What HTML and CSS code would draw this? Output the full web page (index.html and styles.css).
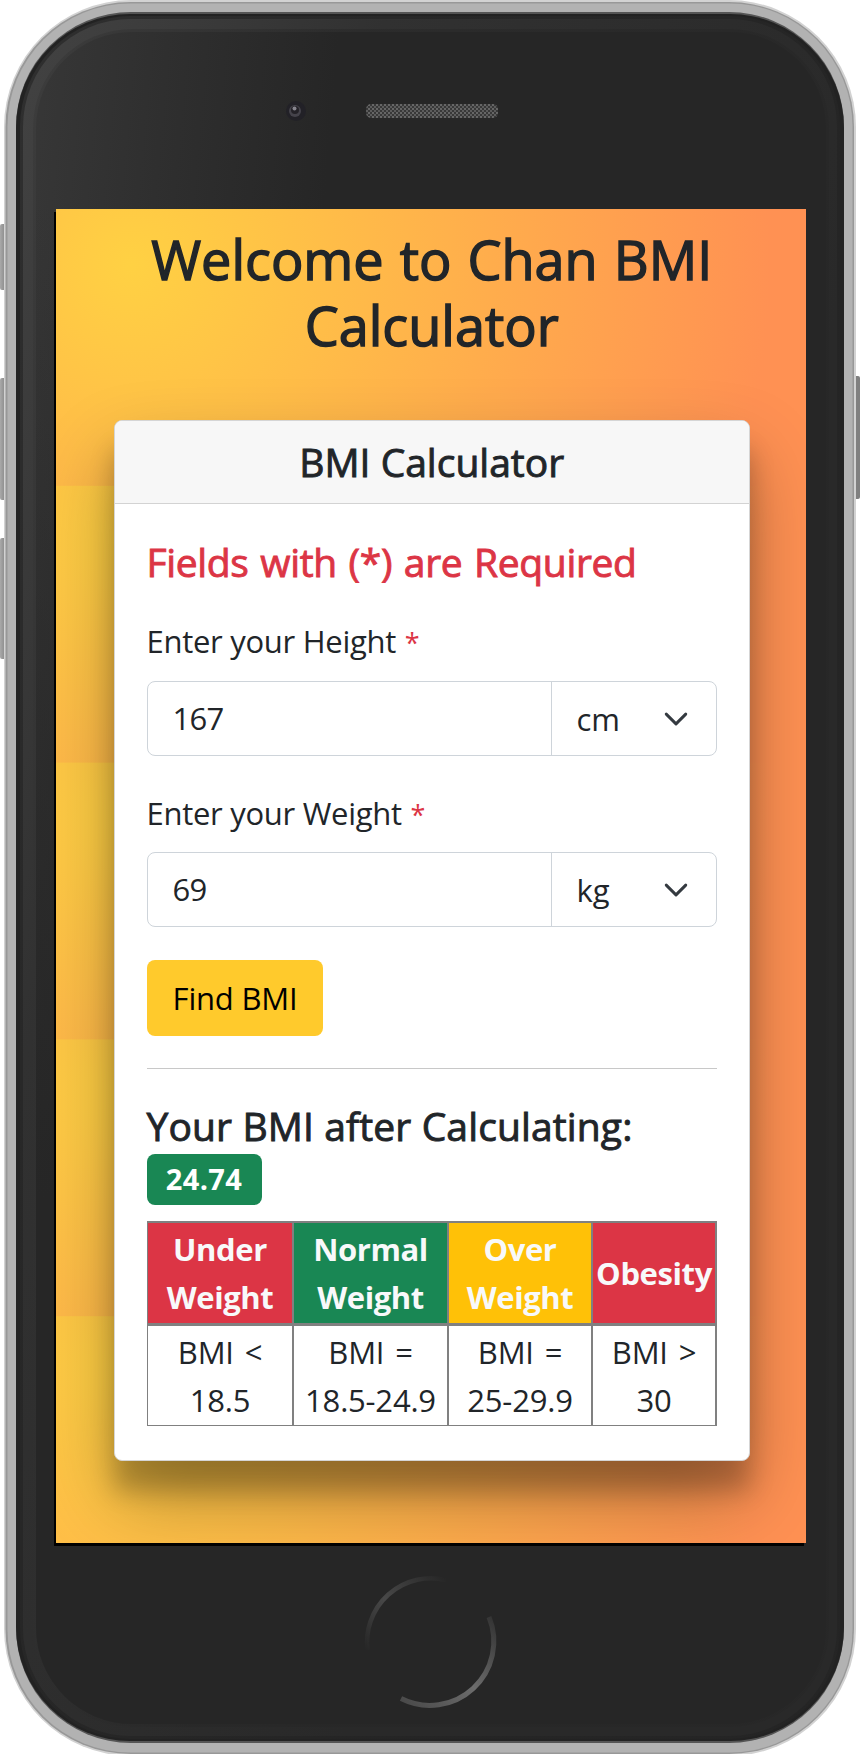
FILE: index.html
```html
<!DOCTYPE html>
<html lang="en">
<head>
<meta charset="utf-8">
<title>Chan BMI Calculator</title>
<link rel="stylesheet" href="styles.css">
</head>
<body>
<div class="phone">
  <svg class="frame" width="861" height="1754" viewBox="0 0 861 1754" aria-hidden="true">
    <defs>
      <linearGradient id="face" x1="0" y1="0" x2="340" y2="30" gradientUnits="userSpaceOnUse">
        <stop offset="0" stop-color="#393939"/><stop offset=".5" stop-color="#2f2f2f"/><stop offset="1" stop-color="#262626"/>
      </linearGradient>
      <linearGradient id="fade" x1="0" y1="200" x2="0" y2="1200" gradientUnits="userSpaceOnUse">
        <stop offset="0" stop-color="#262626" stop-opacity="0"/><stop offset="1" stop-color="#262626"/>
      </linearGradient>
      <linearGradient id="edge" x1="16" y1="12" x2="844" y2="300" gradientUnits="userSpaceOnUse">
        <stop offset="0" stop-color="#434343"/><stop offset=".4" stop-color="#313131"/><stop offset="1" stop-color="#292929"/>
      </linearGradient>
      <linearGradient id="btn" x1="0" x2="1"><stop offset="0" stop-color="#aaa"/><stop offset="1" stop-color="#777"/></linearGradient>
      <linearGradient id="arcTop" x1="366" y1="1650" x2="446" y2="1578" gradientUnits="userSpaceOnUse">
        <stop offset="0" stop-color="#262626"/><stop offset=".45" stop-color="#484848"/><stop offset="1" stop-color="#262626"/>
      </linearGradient>
      <linearGradient id="arcBottom" x1="490" y1="1614" x2="400" y2="1704" gradientUnits="userSpaceOnUse">
        <stop offset="0" stop-color="#333"/><stop offset=".5" stop-color="#6c6c6c"/><stop offset="1" stop-color="#484848"/>
      </linearGradient>
      <pattern id="mesh" width="4" height="4" patternUnits="userSpaceOnUse">
        <rect width="4" height="4" fill="#383838"/><rect width="2" height="2" fill="#666"/><rect x="2" y="2" width="2" height="2" fill="#5c5c5c"/>
      </pattern>
    </defs>
    <g fill="url(#btn)">
      <rect x="0" y="224" width="8" height="66" rx="2"/>
      <rect x="0" y="378" width="8" height="122" rx="2"/>
      <rect x="0" y="538" width="8" height="121" rx="2"/>
      <rect x="852" y="376" width="8" height="123" rx="2" fill="#808080"/>
    </g>
    <rect x="4" y="0" width="852" height="1756" rx="127" fill="#d2d2d2"/>
    <rect x="5.5" y="2" width="848.5" height="1752" rx="125" fill="#989898"/>
    <rect x="7.5" y="3.5" width="845" height="1749" rx="123" fill="#b2b2b2"/>
    <rect x="16" y="12" width="828" height="1731" rx="115" fill="#555"/>
    <rect x="16" y="14" width="828" height="1727" rx="114" fill="#222"/>
    <rect x="20" y="16" width="820" height="1723" rx="111" fill="url(#edge)" opacity=".4"/>
    <rect x="23" y="19" width="814" height="1717" rx="108" fill="url(#edge)"/>
    <rect x="33" y="29" width="796" height="1698" rx="99" fill="url(#face)" opacity=".5"/>
    <rect x="36" y="32" width="790" height="1692" rx="96" fill="url(#face)"/>
    <rect x="36" y="32" width="790" height="1692" rx="96" fill="url(#fade)"/>
    <path d="M54 212H58V1543H804V1546H54Z" fill="#000"/>
    <circle cx="296" cy="111" r="10" fill="#222127"/>
    <circle cx="295" cy="111" r="6" fill="#45434b"/>
    <circle cx="295" cy="110" r="4" fill="#242228"/>
    <circle cx="294.500" cy="108.500" r="2" fill="#88868f"/>
    <rect x="366" y="104" width="132" height="14" rx="5" fill="url(#mesh)"/>
    <path d="M367.500 1650A64 64 0 0 1 446 1580" fill="none" stroke="url(#arcTop)" stroke-width="4.500"/>
    <path d="M489 1617A64 64 0 0 1 401 1698.500" fill="none" stroke="url(#arcBottom)" stroke-width="5"/>
  </svg>
  <main class="screen">
    <h1 class="title">Welcome to Chan BMI<br>Calculator</h1>
    <section class="card">
      <header class="card-header"><h2 class="card-title">BMI Calculator</h2></header>
      <div class="card-body">
        <h3 class="required">Fields with (*) are Required</h3>
        <label class="label label-height">Enter your Height <span class="star">*</span></label>
        <div class="group">
          <div class="input">167</div>
          <div class="select"><span class="unit">cm</span><svg class="chevron" viewBox="0 0 16 16"><path d="m2 5 6 6 6-6"/></svg></div>
        </div>
        <label class="label label-weight">Enter your Weight <span class="star">*</span></label>
        <div class="group">
          <div class="input">69</div>
          <div class="select"><span class="unit">kg</span><svg class="chevron" viewBox="0 0 16 16"><path d="m2 5 6 6 6-6"/></svg></div>
        </div>
        <button class="button">Find BMI</button>
        <hr class="rule">
        <h3 class="result">Your BMI after Calculating:</h3>
        <div class="badge">24.74</div>
        <div class="table">
          <div class="cell head danger">Under<br>Weight</div>
          <div class="cell head success">Normal<br>Weight</div>
          <div class="cell head warning">Over<br>Weight</div>
          <div class="cell head danger">Obesity</div>
          <div class="cell">BMI &lt;<br>18.5</div>
          <div class="cell">BMI =<br>18.5-24.9</div>
          <div class="cell">BMI =<br>25-29.9</div>
          <div class="cell">BMI &gt;<br>30</div>
        </div>
      </div>
    </section>
  </main>
</div>
</body>
</html>
```
FILE: styles.css
```css
* { box-sizing: border-box; }
html, body { margin: 0; background: #fff; }
body {
  width: 861px;
  height: 1754px;
  overflow: hidden;
  font-family: "Open Sans", "Noto Sans", sans-serif;
  font-size: 31px;
  line-height: 48px;
  color: #212529;
}
h1, h2, h3 { margin: 0; font-weight: 400; }
.phone { position: relative; width: 861px; height: 1754px; padding: 209px 55px 0 56px; }
.frame { position: absolute; left: 0; top: 0; }
.screen {
  position: relative;
  height: 1334px;
  overflow: hidden;
  padding: 17px 56px 0 57.500px;
  background-image: radial-gradient(circle farthest-corner at 10% 20%, rgb(255, 209, 67) 0%, rgb(255, 145, 83) 90%);
  background-size: 750px 276.800px;
}
.title {
  height: 194px;
  text-align: center;
  font-size: 54px;
  line-height: 66.400px;
  word-spacing: 2px;
  -webkit-text-stroke: 1.400px currentColor;
}
.card {
  height: 1040.500px;
  border: 1.500px solid #d5d5d5;
  border-radius: 8px;
  background: #fff;
  box-shadow: 0 38px 76px rgba(0, 0, 0, .3), 0 30px 24px rgba(0, 0, 0, .22);
}
.card-header {
  height: 83px;
  padding-top: 17px;
  border-bottom: 1px solid #d3d3d3;
  border-radius: 7px 7px 0 0;
  background: #f7f7f7;
  text-align: center;
}
.card-title, .required, .result { font-size: 39px; line-height: 48px; -webkit-text-stroke: .900px currentColor; }
.card-body { padding: 34px 32px 0; }
.required { color: #dc3545; letter-spacing: -.35px; word-spacing: 2px; }
.label { display: block; letter-spacing: -.28px; }
.label-height { margin-top: 31px; margin-bottom: 16px; }
.label-weight { margin-top: 33px; margin-bottom: 15px; }
.star { margin-left: 1px; color: #dc3545; font-size: 27px; line-height: 0; }
.group { display: flex; height: 75px; border: 1.500px solid #ced4da; border-radius: 8px; line-height: 73px; }
.input { width: 404px; padding-left: 25px; border-right: 1.500px solid #ced4da; letter-spacing: -.7px; }
.select { display: flex; flex: 1; align-items: center; justify-content: space-between; padding: 0 27px 0 25px; }
.unit { padding-top: 2px; }
.chevron { width: 26px; height: 26px; fill: none; stroke: #343a40; stroke-width: 1.800; stroke-linecap: round; stroke-linejoin: round; }
.button {
  display: block;
  width: 176px;
  height: 76px;
  margin-top: 33px;
  padding: 0 0 1px 1px;
  border: 0;
  border-radius: 8px;
  background: #ffca2c;
  color: #000;
  font: inherit;
  letter-spacing: -.2px;
}
.rule { height: 1.500px; margin: 31.500px 0 33px; border: 0; background: #c8c8c8; }
.result { letter-spacing: .13px; }
.badge {
  width: 115px;
  height: 51px;
  margin-top: 4px;
  border-radius: 8px;
  background: #198754;
  color: #fff;
  font-size: 29px;
  font-weight: 700;
  letter-spacing: .4px;
  line-height: 50px;
  text-align: center;
}
.table {
  display: grid;
  grid-template-columns: 144px 153px 142px 1fr;
  grid-template-rows: 100px 99px;
  gap: 3px 2px;
  width: 570px;
  height: 205px;
  margin-top: 16px;
  padding: 1.500px;
  background: #808080;
}
.cell { display: flex; align-items: center; justify-content: center; padding-top: 2px; background: #fff; text-align: center; letter-spacing: -.2px; word-spacing: 3px; }
.head { padding-top: 0; color: #f8f9fa; font-weight: 700; letter-spacing: -.4px; }
.danger { background: #dc3545; }
.success { background: #198754; }
.warning { background: #ffc107; }
```
